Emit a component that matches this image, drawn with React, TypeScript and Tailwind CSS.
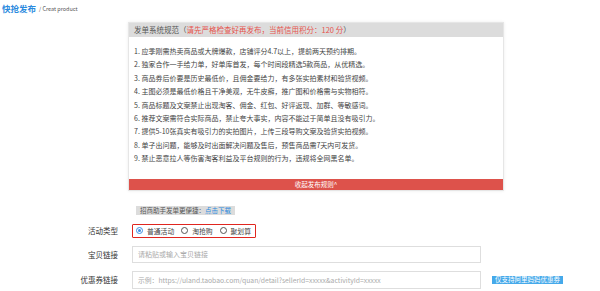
const rules = [
  '1. 应季刚需热卖商品或大牌爆款，店铺评分4.7以上，提前两天预约排期。',
  '2. 独家合作一手给力单，好单库首发，每个时间段精选5款商品，从优精选。',
  '3. 商品券后价要是历史最低价，且佣金要给力，有多张实拍素材和验货视频。',
  '4. 主图必须是最低价格且干净美观，无牛皮癣，推广图和价格需与实物相符。',
  '5. 商品标题及文案禁止出现淘客、佣金、红包、好评返现、加群、等敏感词。',
  '6. 推荐文案需符合实际商品，禁止夸大事实，内容不能过于简单且没有吸引力。',
  '7. 提供5-10张真实有吸引力的实拍图片，上传三段导购文案及验货实拍视频。',
  '8. 单子出问题，能够及时出面解决问题及售后，预售商品需7天内可发货。',
  '9. 禁止恶意拉人等伤害淘客利益及平台规则的行为，违规将全网黑名单。',
];

function Radio({ label, checked }: { label: string; checked?: boolean }) {
  return (
    <label className="flex items-center gap-[4px] whitespace-nowrap">
      <span
        className={
          'flex h-[7px] w-[7px] shrink-0 items-center justify-center rounded-full border ' +
          (checked ? 'border-[#3b8ee3]' : 'border-[#555]')
        }
      >
        {checked && <span className="h-[3px] w-[3px] rounded-full bg-[#3b8ee3]" />}
      </span>
      <span className="text-[6.8px] leading-[8px] text-[#444]">{label}</span>
    </label>
  );
}

export default function App() {
  return (
    <div
      className="relative h-[291px] w-[600px] overflow-hidden bg-white"
      style={{ fontFamily: '"Noto Sans CJK SC", "Noto Sans", sans-serif' }}
    >
      {/* page title */}
      <div className="flex items-end gap-[3px] pl-[2px] pt-[3px]">
        <span className="text-[8.5px] font-bold leading-[11px] text-[#2b8ade]">快抢发布</span>
        <span className="pb-[1px] text-[5.5px] leading-[7px] text-[#555]">/ Creat product</span>
      </div>

      {/* rules panel */}
      <div className="ml-[128px] mt-[8px] w-[376px] border border-[#e6e6e6] bg-white shadow-[0_0_3px_rgba(0,0,0,0.08)]">
        <div className="flex h-[14px] items-center whitespace-nowrap bg-[#dcdcdc] px-[5px] text-[7.5px] text-[#555]">
          发单系统规范（<span className="text-[#e6534c]">请先严格检查好再发布，当前信用积分：120 分</span>）
        </div>
        <div className="h-[142px] px-[5px] pt-[8px]">
          {rules.map((r) => (
            <div key={r} className="whitespace-nowrap text-[7px] leading-[13.4px] text-[#444]">
              {r}
            </div>
          ))}
        </div>
        <div className="flex h-[11px] items-center justify-center bg-[#dd524b] text-[6.5px] text-white">
          收起发布规则^
        </div>
      </div>

      {/* download tip */}
      <div className="ml-[136px] mt-[15px] inline-flex h-[9px] items-center whitespace-nowrap bg-[#dcdcdc] px-[4px] text-[6.5px] text-[#555]">
        招商助手发单更便捷：<span className="text-[#2b8ade]">点击下载</span>
      </div>

      {/* form */}
      <div className="mt-[6px] grid grid-cols-[118px_1fr] items-center gap-x-[14px] gap-y-[8px]">
        <div className="text-right text-[7.5px] text-[#333]">活动类型</div>
        <div className="flex h-[14px] w-[124px] items-center gap-[7px] rounded-[1px] border border-[#e0261f] pl-[3px]">
          <Radio label="普通活动" checked />
          <Radio label="淘抢购" />
          <Radio label="聚划算" />
        </div>

        <div className="text-right text-[7.5px] text-[#333]">宝贝链接</div>
        <div className="flex items-center">
          <div className="flex h-[17px] w-[349px] items-center border border-[#dedede] px-[5px] text-[7px] text-[#aaa]">
            请粘贴或输入宝贝链接
          </div>
        </div>

        <div className="text-right text-[7.5px] text-[#333]">优惠券链接</div>
        <div className="flex items-center gap-[11px]">
          <div className="flex h-[18px] w-[349px] items-center whitespace-nowrap border border-[#dedede] px-[5px] text-[6.8px] text-[#aaa]">
            示例：https://uland.taobao.com/quan/detail?sellerId=xxxxx&amp;activityId=xxxxx
          </div>
          <span className="flex h-[8px] items-center whitespace-nowrap bg-[#45a9ea] px-[3px] text-[6.5px] text-white">
            仅支持阿里妈妈优惠券
          </span>
        </div>
      </div>
    </div>
  );
}
